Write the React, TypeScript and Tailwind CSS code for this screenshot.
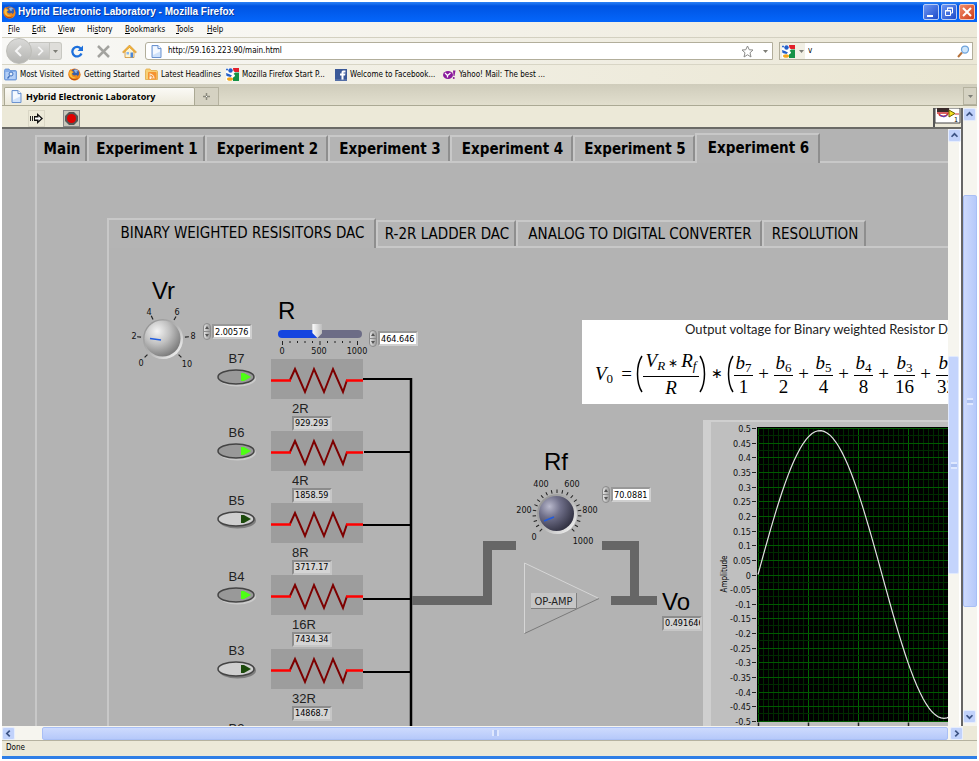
import React, { useState } from "react";

const PANEL_FONT = "font-['DejaVu_Sans_Condensed','DejaVu_Sans',sans-serif]";

/* ---------- Small drawings ---------- */

function FirefoxIcon() {
  return (
    <svg className="size-[13px] shrink-0" viewBox="0 0 26 26" aria-hidden="true">
      <circle cx="13" cy="13" r="12" fill="#e0701a" />
      <circle cx="14" cy="11" r="8.5" fill="#3a5fa8" />
      <path d="M12 4c3-2 7-1 9 2l-4 1 1 3-4-1z" fill="#8fb8e8" />
      <path d="M1 9C2 5 4 3 6 2c0 3 2 4 5 5 1 2-1 3-3 4 1 4 5 5 9 3 2 0 2 2 1 3 4-1 5-6 4-10 3 3 4 9 1 13-3 5-11 6-16 3S0 15 1 9z" fill="#f08a1c" />
      <path d="M3 9c1-2 2-4 3-4 1 3 3 3 4 3-1 2-3 2-3 5 0 4 5 7 9 6-5 4-15-1-13-10z" fill="#f9c440" />
      <path d="M2 15c3 8 13 10 19 4-4 7-16 8-19-4z" fill="#a93a10" />
    </svg>
  );
}

function PageIcon() {
  return (
    <svg className="h-[13px] w-[11px] shrink-0" viewBox="0 0 22 26" aria-hidden="true">
      <path d="M2 1h12l6 6v18H2z" fill="#cfe2fb" stroke="#6c93cf" strokeWidth="2" />
      <path d="M4 3h9v6h5v4L4 20z" fill="#f5f9ff" />
      <path d="M14 1v6h6" fill="#fff" stroke="#6c93cf" strokeWidth="2" />
    </svg>
  );
}

function GoogleIcon() {
  return (
    <svg className="size-[13px] shrink-0" viewBox="0 0 26 26" aria-hidden="true">
      <rect width="26" height="26" fill="#fff" />
      <path d="M14 0h12v8h-8c-2 0-4-3-4-8z" fill="#e3202b" />
      <path d="M18 9h8v17H14v-7c3-1 4-3 4-5l-3-2z" fill="#159246" />
      <circle cx="9" cy="5" r="4.500" fill="#2460c8" />
      <path d="M0 10l6 2 6 3-3 3-8-2z" fill="#2460c8" />
      <circle cx="2" cy="3" r="2" fill="#2460c8" />
      <ellipse cx="8" cy="22" rx="6" ry="3.500" fill="#f5a81c" />
    </svg>
  );
}

function FolderIcon() {
  return (
    <svg className="size-[13px] shrink-0" viewBox="0 0 26 26" aria-hidden="true">
      <path d="M1 5c0-2 1-3 3-3h6l2 3h11c1 0 2 1 2 2v15c0 1-1 2-2 2H3c-1 0-2-1-2-2z" fill="#86aeea" stroke="#5b8ad0" strokeWidth="1.5" />
      <path d="M3 8h20v14H3z" fill="#b4cff6" />
      <circle cx="14" cy="12" r="4" fill="#e5effc" stroke="#3f70bd" strokeWidth="2" />
      <path d="M11 16l-4 5" stroke="#3f70bd" strokeWidth="2.5" />
    </svg>
  );
}

function RssIcon() {
  return (
    <svg className="size-[13px] shrink-0" viewBox="0 0 26 26" aria-hidden="true">
      <path d="M1 5c0-2 1-3 3-3h6l2 3h11c1 0 2 1 2 2v16H1z" fill="#f8d076" stroke="#dda540" strokeWidth="1.5" />
      <rect x="6" y="8" width="17" height="15" rx="2" fill="#f59331" />
      <path d="M9 12c5 0 9 3 9 9M9 16c3 0 5 2 5 5" fill="none" stroke="#fff" strokeWidth="2" />
      <circle cx="10.500" cy="20" r="1.800" fill="#fff" />
    </svg>
  );
}

function FacebookIcon() {
  return (
    <svg className="size-[12px] shrink-0" viewBox="0 0 24 24" aria-hidden="true">
      <rect width="24" height="24" fill="#3b5998" />
      <path d="M13 22v-9h-3V9h3V7c0-3 2-4 4-4h4v4h-3c-1 0-1 1-1 2h4l-1 4h-3v9z" fill="#fff" />
      <rect y="21" width="24" height="2" fill="#6d84b4" />
    </svg>
  );
}

function YahooIcon() {
  return (
    <svg className="h-[12px] w-[13px] shrink-0" viewBox="0 0 26 24" aria-hidden="true">
      <ellipse cx="10" cy="12" rx="10" ry="8" fill="#8a1a9c" />
      <path d="M4 8l5 5v4M15 8l-6 5" fill="none" stroke="#fff" strokeWidth="2.500" />
      <path d="M20 3h5l-2 11h-2z" fill="#8a1a9c" />
      <circle cx="21.500" cy="18" r="2" fill="#8a1a9c" />
    </svg>
  );
}

function DownArrow() {
  return (
    <svg className="h-[3px] w-[5px]" viewBox="0 0 5 3" aria-hidden="true">
      <path d="M0 0h5L2.500 3z" fill="#7d7d76" />
    </svg>
  );
}

/* ---------- Browser chrome ---------- */

function TitleBar() {
  return (
    <header className="flex h-[20px] shrink-0 items-center bg-linear-to-b from-[#2c82f6] via-[#0054e3] via-20% to-[#0566fb] pr-[2px] pl-px">
      <FirefoxIcon />
      <h1 className="ml-[2px] flex-1 font-['Liberation_Sans',Arial,sans-serif] text-[10px] font-bold text-white [text-shadow:1px_1px_#0a3a9a]">
        Hybrid Electronic Laboratory - Mozilla Firefox
      </h1>
      <div className="flex gap-[2px]">
        <button aria-label="Minimize" className="size-[16px] rounded-[2px] border border-[#b9cdf5] bg-linear-to-br from-[#6e95f2] to-[#1c49c9]">
          <svg viewBox="0 0 14 14"><path d="M3 10h6v2H3z" fill="#fff" /></svg>
        </button>
        <button aria-label="Restore" className="size-[16px] rounded-[2px] border border-[#b9cdf5] bg-linear-to-br from-[#6e95f2] to-[#1c49c9]">
          <svg viewBox="0 0 14 14" fill="none" stroke="#fff">
            <path d="M5.500 5V3h5v5H9M5 3h6" />
            <path d="M3.500 5.500h5v5h-5zM3 6h6" />
          </svg>
        </button>
        <button aria-label="Close" className="size-[16px] rounded-[2px] border border-[#f3c5b6] bg-linear-to-br from-[#f08a68] to-[#cf3a10]">
          <svg viewBox="0 0 14 14"><path d="M3 3l8 8M11 3l-8 8" stroke="#fff" strokeWidth="2" /></svg>
        </button>
      </div>
    </header>
  );
}

const MENUS = [
  { pre: "", key: "F", post: "ile", width: "w-[24px]" },
  { pre: "", key: "E", post: "dit", width: "w-[26px]" },
  { pre: "", key: "V", post: "iew", width: "w-[29px]" },
  { pre: "Hi", key: "s", post: "tory", width: "w-[38px]" },
  { pre: "", key: "B", post: "ookmarks", width: "w-[51px]" },
  { pre: "", key: "T", post: "ools", width: "w-[31px]" },
  { pre: "", key: "H", post: "elp", width: "w-[24px]" },
];

function MenuBar() {
  return (
    <nav aria-label="Menu" className="flex h-[16px] shrink-0 items-center border-b border-[#d3d0c0] bg-linear-to-r from-[#fbfbfa] to-[#ece8d8] pl-[6px]">
      {MENUS.map((m) => (
        <button key={m.post} className={`text-left whitespace-nowrap ${m.width}`}>
          {m.pre}
          <span className="underline">{m.key}</span>
          {m.post}
        </button>
      ))}
    </nav>
  );
}

function NavBar() {
  return (
    <div className="flex h-[27px] shrink-0 items-center border-b border-[#d8d5c5] bg-linear-to-r from-[#f8f8f6] to-[#ebe7d6] pr-[4px]">
      <div className="ml-[4px] flex items-center">
        <button aria-label="Back" className="z-10 grid size-[26px] place-items-center rounded-full border border-[#bdbdb8] bg-linear-to-b from-[#dadad8] to-[#b5b5b2]">
          <svg className="size-[12px]" viewBox="0 0 12 12"><path d="M8 1L3 6l5 5" fill="none" stroke="#f6f6f6" strokeWidth="2" /></svg>
        </button>
        <button aria-label="Forward" className="-ml-[3px] grid h-[18px] w-[21px] place-items-center border border-[#c4c4bf] bg-linear-to-b from-[#dededc] to-[#bebebb]">
          <svg className="size-[10px]" viewBox="0 0 12 12"><path d="M4 1l5 5-5 5" fill="none" stroke="#f6f6f6" strokeWidth="2" /></svg>
        </button>
        <button aria-label="Recent pages" className="grid h-[18px] w-[12px] place-items-center rounded-r-[3px] border border-l-0 border-[#c8c8c2] bg-[#dfdeda]">
          <DownArrow />
        </button>
      </div>
      <button aria-label="Reload" className="ml-[9px]">
        <svg className="size-[13px]" viewBox="0 0 26 26">
          <path d="M21 17a9.500 9.500 0 1 1-1-9" fill="none" stroke="#1e70dc" strokeWidth="4.500" />
          <path d="M24 1v11H13z" fill="#1e70dc" />
        </svg>
      </button>
      <button aria-label="Stop" className="ml-[13px]">
        <svg className="size-[13px]" viewBox="0 0 13 13"><path d="M1 1l11 11M12 1L1 12" stroke="#a3a39f" strokeWidth="2.500" /></svg>
      </button>
      <button aria-label="Home" className="ml-[12px]">
        <svg className="size-[15px]" viewBox="0 0 30 30">
          <path d="M6 14v13h18V14l-9-9z" fill="#fdf3d0" stroke="#c98a2a" strokeWidth="1.500" />
          <path d="M1 16L15 2l14 14-2 2L15 7 3 18z" fill="#f4b53a" stroke="#c47a14" />
          <path d="M17 17h5v10h-5z" fill="#4b86d8" />
          <path d="M9 16h5v5H9z" fill="#8ab8f0" />
        </svg>
      </button>
      <div className="ml-[8px] flex h-[18px] flex-1 items-center rounded-l-[3px] border border-[#b2ae9b] bg-white pr-[4px] pl-[5px]">
        <PageIcon />
        <input aria-label="Address" defaultValue="http://59.163.223.90/main.html" className="ml-[6px] min-w-0 flex-1 bg-transparent outline-none" />
        <button aria-label="Bookmark this page" className="mr-[9px]">
          <svg className="size-[13px]" viewBox="0 0 26 26"><path d="M13 2l3.500 7.500L24 10l-6 5.500L20 24l-7-4.500L6 24l2-8.500L2 10l7.500-.5z" fill="#fff" stroke="#8a8a88" strokeWidth="2" /></svg>
        </button>
        <button aria-label="Address history"><DownArrow /></button>
      </div>
      <div className="ml-[6px] flex h-[18px] w-[194px] items-center border border-[#b2ae9b] bg-white pr-[2px]">
        <button aria-label="Search engine" className="flex h-full w-[25px] items-center gap-[4px] bg-[#f1efe4] pl-[2px]">
          <GoogleIcon />
          <DownArrow />
        </button>
        <input aria-label="Search" defaultValue="v" className="ml-[3px] min-w-0 flex-1 bg-transparent outline-none" />
        <button aria-label="Go">
          <svg className="size-[13px]" viewBox="0 0 26 26">
            <path d="M10 15l-8 9" stroke="#b5713a" strokeWidth="4" />
            <circle cx="16" cy="9" r="7" fill="#cfe6fb" stroke="#6ea3da" strokeWidth="2.500" />
          </svg>
        </button>
      </div>
    </div>
  );
}

const BOOKMARKS = [
  { label: "Most Visited", icon: <FolderIcon />, width: "w-[64px]" },
  { label: "Getting Started", icon: <FirefoxIcon />, width: "w-[77px]" },
  { label: "Latest Headlines", icon: <RssIcon />, width: "w-[81px]" },
  { label: "Mozilla Firefox Start P...", icon: <GoogleIcon />, width: "w-[109px]" },
  { label: "Welcome to Facebook...", icon: <FacebookIcon />, width: "w-[108px]" },
  { label: "Yahoo! Mail: The best ...", icon: <YahooIcon />, width: "w-[110px]" },
];

function BookmarksBar() {
  return (
    <nav aria-label="Bookmarks" className="flex h-[19px] shrink-0 items-center bg-linear-to-r from-[#f6f5f0] to-[#eae6d2] pl-[2px]">
      {BOOKMARKS.map((b) => (
        <a key={b.label} href="#" className={`flex items-center gap-[3px] whitespace-nowrap ${b.width}`}>
          {b.icon}
          {b.label}
        </a>
      ))}
    </nav>
  );
}

function TabStrip() {
  return (
    <div className="flex h-[22px] shrink-0 items-end border-b border-[#aba994] bg-linear-to-b from-[#cfccbb] to-[#e2dfce] pl-[2px]">
      <button className="flex h-[18px] w-[191px] items-center gap-[4px] rounded-t-[2px] border border-b-0 border-[#aba994] bg-linear-to-b from-[#fbfaf6] to-[#ece9da] pl-[6px] font-['Open_Sans',sans-serif] text-[9px] font-bold">
        <PageIcon />
        Hybrid Electronic Laboratory
      </button>
      <button aria-label="New tab" className="grid h-[18px] w-[24px] place-items-center border border-b-0 border-l-0 border-[#b5b29f] bg-[#d5d2c2]">
        <svg className="size-[7px]" viewBox="0 0 7 7"><path d="M3.500 0v7M0 3.500h7" stroke="#8b8a7e" strokeWidth="1.500" /><path d="M3 3.500h1" stroke="#fff" /></svg>
      </button>
      <button aria-label="List all tabs" className="ml-auto grid h-[18px] w-[14px] place-items-center border border-[#b5b29f] bg-[#d5d2c2]">
        <DownArrow />
      </button>
    </div>
  );
}

/* ---------- Scroll bars ---------- */

const ARROWS = {
  up: "M3 8l3.500-3.500L10 8",
  down: "M3 5l3.500 3.500L10 5",
  left: "M8 3L4.500 6.500 8 10",
  right: "M5 3l3.500 3.500L5 10",
};

function ScrollButton({ dir }: { dir: keyof typeof ARROWS }) {
  return (
    <button aria-label={`Scroll ${dir}`} className="size-[13px] shrink-0 rounded-[2px] border border-[#e6edfd] bg-[#c1d2fb]">
      <svg viewBox="0 0 13 13"><path d={ARROWS[dir]} fill="none" stroke="#3d5485" strokeWidth="2" /></svg>
    </button>
  );
}

/* ---------- Instrument controls ---------- */

function NumericControl({ label, value }: { label: string; value: string }) {
  const [text, setText] = useState(value);
  const step = (d: number) => setText(String(Number((Number(text) + d).toFixed(5))));
  return (
    <div className="flex items-center gap-px">
      <div className="flex h-[17px] w-[8px] flex-col overflow-hidden rounded-full border border-[#8c8c8c] bg-linear-to-r from-[#e2e2e2] to-[#9c9c9c]">
        <button aria-label={`Increase ${label}`} onClick={() => step(1)} className="grid flex-1 place-items-center border-b border-[#8c8c8c]">
          <svg className="h-[3px] w-[4px]" viewBox="0 0 4 3"><path d="M0 3l2-3 2 3z" fill="#555" /></svg>
        </button>
        <button aria-label={`Decrease ${label}`} onClick={() => step(-1)} className="grid flex-1 place-items-center">
          <svg className="h-[3px] w-[4px]" viewBox="0 0 4 3"><path d="M0 0l2 3 2-3z" fill="#555" /></svg>
        </button>
      </div>
      <input
        aria-label={label}
        value={text}
        onChange={(e) => setText(e.target.value)}
        className="h-[15px] w-[40px] border-2 border-t-[#989898] border-r-[#cfcfcf] border-b-[#cfcfcf] border-l-[#989898] bg-white pl-px text-[9px] outline-none"
      />
    </div>
  );
}

function Indicator({ value, label }: { value: string; label: string }) {
  return (
    <output
      aria-label={label}
      className="block h-[15px] w-[40px] overflow-hidden border-2 border-t-[#8c8c8c] border-r-[#c6c6c6] border-b-[#c6c6c6] border-l-[#8c8c8c] bg-[#d4d4d4] pl-px text-[9px] leading-[11px] whitespace-nowrap"
    >
      {value}
    </output>
  );
}

const VR_TICKS = [
  { t: "0", a: 225, x: 2, y: 61 },
  { t: "2", a: 275, x: -5, y: 34 },
  { t: "4", a: 333, x: 10, y: 10 },
  { t: "6", a: 30, x: 38, y: 10 },
  { t: "8", a: 85, x: 54, y: 34 },
  { t: "10", a: 135, x: 48, y: 62 },
];

function VrKnob() {
  return (
    <svg className="block h-[68px] w-[84px]" viewBox="-12 0 84 68" role="img" aria-label="Vr knob set to 2.00576">
      <defs>
        <radialGradient id="vr" cx="0.35" cy="0.3" r="0.8">
          <stop offset="0" stopColor="#f4f4f4" />
          <stop offset="0.45" stopColor="#c0c0c0" />
          <stop offset="1" stopColor="#6f6f6f" />
        </radialGradient>
        <linearGradient id="rim" x1="0" y1="0" x2="1" y2="1">
          <stop offset="0" stopColor="#8a8a8a" />
          <stop offset="0.5" stopColor="#b4b4b4" />
          <stop offset="1" stopColor="#fff" />
        </linearGradient>
      </defs>
      {VR_TICKS.map((k) => (
        <g key={k.t}>
          <path d="M24 12v-4" transform={`rotate(${k.a} 24 34)`} stroke="#222" strokeWidth="1.200" />
          <text x={k.x} y={k.y} fontSize="9" textAnchor="middle" fill="#111">{k.t}</text>
        </g>
      ))}
      <circle cx="24" cy="34" r="20" fill="url(#rim)" />
      <circle cx="23.500" cy="33.500" r="18" fill="url(#vr)" />
      <path d="M11 33.500l11 1.500" stroke="#1f5be0" strokeWidth="1.500" />
    </svg>
  );
}

const RF_TICKS = Array.from({ length: 21 }, (_, i) => 225 + i * 13.5);

function RfKnob() {
  return (
    <svg className="block h-[70px] w-[88px]" viewBox="516 476 88 70" role="img" aria-label="Rf knob set to 70.0881">
      <defs>
        <radialGradient id="rf" cx="0.3" cy="0.3" r="0.8">
          <stop offset="0" stopColor="#b9b9cc" />
          <stop offset="0.4" stopColor="#70708a" />
          <stop offset="1" stopColor="#2c2c3c" />
        </radialGradient>
      </defs>
      {RF_TICKS.map((a) => (
        <path key={a} d="M557 489.500v3.500" transform={`rotate(${a} 557 514)`} stroke="#222" />
      ))}
      <circle cx="557" cy="514" r="20" fill="url(#rim)" />
      <circle cx="556.500" cy="513.500" r="17.500" fill="url(#rf)" />
      <path d="M544 521l10-4" stroke="#1f5be0" strokeWidth="1.500" />
      <g fontSize="9" textAnchor="middle" fill="#111">
        <text x="534" y="540">0</text>
        <text x="524" y="513">200</text>
        <text x="541" y="487">400</text>
        <text x="572" y="487">600</text>
        <text x="590" y="513">800</text>
        <text x="583" y="544">1000</text>
      </g>
    </svg>
  );
}

function BitSwitch({ name, initial, height }: { name: string; initial: boolean; height: string }) {
  const [on, setOn] = useState(initial);
  return (
    <div className={`flex shrink-0 flex-col items-center ${height}`}>
      <label htmlFor={name} className="font-['Liberation_Sans',Arial,sans-serif] text-[13px] leading-[16px] text-[#222]">{name}</label>
      <button id={name} role="switch" aria-checked={on} onClick={() => setOn(!on)} className="mt-px">
        <svg className="block h-[19px] w-[41px]" viewBox="0 0 41 19">
          <ellipse cx="21.500" cy="10.500" rx="18.500" ry="8" fill={on ? "#cacaca" : "#7c7c7c"} />
          <ellipse cx="20" cy="9" rx="18" ry="7" fill={on ? "#999" : "#cfcfcf"} stroke="#444" strokeWidth="1.500" />
          <path d="M25 5h3l7 4-7 4h-3z" fill={on ? "#4eff14" : "#1c4a0c"} />
        </svg>
      </button>
    </div>
  );
}

const BITS = [
  { name: "B7", on: true, height: "h-[74px]" },
  { name: "B6", on: true, height: "h-[68px]" },
  { name: "B5", on: false, height: "h-[76px]" },
  { name: "B4", on: true, height: "h-[74px]" },
  { name: "B3", on: false, height: "h-[78px]" },
  { name: "B2", on: false, height: "h-[74px]" },
];

const RESISTORS = [
  { name: "2R", value: "929.293", height: "h-[72px]" },
  { name: "4R", value: "1858.59", height: "h-[72px]" },
  { name: "8R", value: "3717.17", height: "h-[72px]" },
  { name: "16R", value: "7434.34", height: "h-[74px]" },
  { name: "32R", value: "14868.7", height: "h-[74px]" },
];

function Resistor({ name, value, height }: { name: string; value: string; height: string }) {
  return (
    <div className={`flex shrink-0 flex-col ${height}`}>
      <svg className="block h-[40px] w-[92px] shrink-0 bg-[#9d9d9d]" viewBox="0 0 92 40" fill="none" aria-hidden="true">
        <path d="M19 21l5-11 10 23 9-23 10 23 9-23 10 23 4-12" stroke="#7d0000" strokeWidth="2" />
        <path d="M0 21.500h20M75 21.500h17" stroke="#ff0000" strokeWidth="2.500" />
      </svg>
      <span className="pt-[2px] pl-[21px] font-['Liberation_Sans',Arial,sans-serif] text-[13px] leading-[15px] text-[#222]">{name}</span>
      <div className="pl-[21px]">
        <Indicator value={value} label={`${name} value`} />
      </div>
    </div>
  );
}

function InputWires() {
  return (
    <svg className="block h-[370px] w-[153px] shrink-0" viewBox="363 359 153 370" fill="none" aria-hidden="true">
      <path d="M363 379h49M364 452h47M363 525h48M363 599h48M363 672h48" stroke="#000" strokeWidth="2" />
      <path d="M411 378v352" stroke="#000" strokeWidth="2.500" />
      <path d="M412 600.500h75.500V545.500H516" stroke="#666" strokeWidth="9" />
    </svg>
  );
}

function OpAmp() {
  return (
    <svg className="block h-[95px] w-[146px] shrink-0" viewBox="516 541 146 95" fill="none" role="img" aria-label="Operational amplifier">
      <path d="M602 545.500h32.500V600M611 600.500h46" stroke="#666" strokeWidth="9" />
      <path d="M524.500 633.500V563L599 598.500" stroke="#d6d6d6" />
      <path d="M524.500 633.500L599 598.500" stroke="#7a7a7a" />
      <rect x="531" y="593" width="45" height="15" fill="#c6c6c6" />
      <path d="M531 608.500h45.500V593" stroke="#808080" />
      <text x="553.500" y="605" fontSize="11" textAnchor="middle" fill="#222">OP-AMP</text>
    </svg>
  );
}

/* ---------- Formula ---------- */

function Term({ sub, den, width }: { sub: string; den: string; width: string }) {
  return (
    <span className={`flex shrink-0 flex-col items-center ${width}`}>
      <i className="w-full border-b border-black text-center leading-[25px] whitespace-nowrap">
        b<sub className="text-[13px] not-italic">{sub}</sub>
      </i>
      <span className="leading-[22px]">{den}</span>
    </span>
  );
}

const TERMS = [
  { sub: "7", den: "1", width: "w-[19px]" },
  { sub: "6", den: "2", width: "w-[19px]" },
  { sub: "5", den: "4", width: "w-[19px]" },
  { sub: "4", den: "8", width: "w-[19px]" },
  { sub: "3", den: "16", width: "w-[21px]" },
  { sub: "2", den: "32", width: "w-[21px]" },
];

function Paren({ close = false }: { close?: boolean }) {
  return (
    <svg className="h-[38px] w-[7px] shrink-0" viewBox="0 0 7 38" aria-hidden="true">
      <path d={close ? "M1 1c6 9 6 27 0 36" : "M6 1C0 10 0 28 6 37"} fill="none" stroke="#000" strokeWidth="1.500" />
    </svg>
  );
}

function Formula() {
  return (
    <figure className="ml-[66px] h-[84px] w-[480px] bg-white">
      <figcaption className="pl-[103px] font-['Lato',Calibri,sans-serif] text-[13px] leading-[19px] text-[#222]">
        Output voltage for Binary weighted Resistor DAC
      </figcaption>
      <div className="mt-[9px] flex items-center pl-[13px] font-['Liberation_Serif',serif] text-[19px] leading-[24px] text-black">
        <i className="w-[22px]">V<sub className="text-[13px] not-italic">0</sub></i>
        <span className="w-[19px] text-center">=</span>
        <Paren />
        <span className="flex w-[56px] shrink-0 flex-col items-center whitespace-nowrap">
          <i className="w-full border-b border-black text-center leading-[25px]">
            V<sub className="text-[13px]">R</sub>
            <span className="mx-[3px] text-[12px] not-italic">∗</span>
            R<sub className="text-[13px]">f</sub>
          </i>
          <i className="leading-[22px]">R</i>
        </span>
        <Paren close />
        <span className="w-[21px] text-center text-[14px]">∗</span>
        <Paren />
        {TERMS.map((t, i) => (
          <React.Fragment key={t.sub}>
            {i > 0 && <span className="w-[21px] shrink-0 text-center">+</span>}
            <Term {...t} />
          </React.Fragment>
        ))}
      </div>
    </figure>
  );
}

/* ---------- Waveform chart ---------- */

const PLOT = { left: 55, top: 8, width: 300, height: 293 };
const LEVELS = Array.from({ length: 21 }, (_, i) => (10 - i) / 20);
const levelY = (v: number) => PLOT.top + (0.5 - v) * PLOT.height;
const WAVE = Array.from({ length: 101 }, (_, i) => {
  const x = i * 3;
  return `${PLOT.left + x},${levelY(0.491 * Math.sin((x / 248) * 2 * Math.PI)).toFixed(1)}`;
}).join(" ");

function Chart() {
  return (
    <svg className="block h-[320px] w-[380px] shrink-0" viewBox="0 0 380 320" role="img" aria-label="Output waveform">
      <rect width="380" height="320" fill="#bfbfbf" />
      <rect width="8" height="320" fill="#cfcfcf" />
      <rect width="380" height="2" fill="#cfcfcf" />
      <rect x={PLOT.left - 1} y={PLOT.top - 1} width={PLOT.width} height={PLOT.height + 2} fill="#000" />
      {Array.from({ length: 60 }, (_, i) => (
        <path key={i} d={`M${PLOT.left + i * 5 + 0.5} 8v293`} stroke={i % 10 === 0 ? "#006400" : "#002c00"} />
      ))}
      {LEVELS.map((v) => (
        <g key={v}>
          <path d={`M55 ${Math.round(levelY(v)) + 0.5}h300`} stroke="#005a00" />
          <path d={`M55 ${Math.round(levelY(v) + 7) + 0.5}h300`} stroke="#002c00" />
          <path d={`M49 ${Math.round(levelY(v)) + 0.5}h4`} stroke="#222" />
          <text x="48" y={levelY(v) + 4} fontSize="9" textAnchor="end" fill="#111">{v}</text>
        </g>
      ))}
      <rect x="54" y="302" width="300" height="18" fill="#bfbfbf" />
      {[0, 1, 2, 3, 4].map((i) => (
        <path key={i} d={`M${55.5 + i * 50} 302.500v4`} stroke="#222" strokeWidth="1.500" />
      ))}
      <polyline points={WAVE} fill="none" stroke="#e0e0e0" strokeWidth="1.200" />
      <text transform="translate(24 154) rotate(-90)" fontSize="8" textAnchor="middle" fill="#000">Amplitude</text>
    </svg>
  );
}

/* ---------- Front panel ---------- */

const EXPERIMENTS = [
  { label: "Main", width: "w-[52px]" },
  { label: "Experiment 1", width: "w-[118px]" },
  { label: "Experiment 2", width: "w-[123px]" },
  { label: "Experiment 3", width: "w-[122px]" },
  { label: "Experiment 4", width: "w-[123px]" },
  { label: "Experiment 5", width: "w-[122px]" },
  { label: "Experiment 6", width: "w-[125px]" },
];

const CIRCUITS = [
  { label: "BINARY WEIGHTED RESISITORS DAC", width: "w-[269px]" },
  { label: "R-2R LADDER DAC", width: "w-[140px]" },
  { label: "ANALOG TO DIGITAL CONVERTER", width: "w-[246px]" },
  { label: "RESOLUTION", width: "w-[104px]" },
];

const TITLE = "font-['Liberation_Sans',Arial,sans-serif] text-[24px] leading-[28px]";

function PanelTabs({ items, active, text }: { items: { label: string; width: string }[]; active: number; text: string }) {
  return (
    <div role="tablist" className={`flex h-[28px] shrink-0 items-end ${text}`}>
      {items.map((t, i) => (
        <button
          key={t.label}
          role="tab"
          aria-selected={i === active}
          className={`shrink-0 border-t-2 border-r-2 border-l-2 border-t-[#c8c8c8] border-r-[#8e8e8e] border-l-[#c8c8c8] bg-[#b4b4b4] pl-[2px] text-center whitespace-nowrap ${t.width} ${
            i === active ? "z-10 -mb-[2px] h-[30px] pb-[3px]" : "h-[26px]"
          }`}
        >
          {t.label}
        </button>
      ))}
    </div>
  );
}

function DacPanel() {
  return (
    <div className="flex">
      <div className="flex w-[160px] shrink-0 flex-col">
        <div className="flex pt-[29px]">
          <div className="ml-[18px] w-[84px] shrink-0">
            <h2 className={`pl-[25px] ${TITLE}`}>Vr</h2>
            <VrKnob />
          </div>
          <div className="-ml-[8px] pt-[46px]">
            <NumericControl label="Vr" value="2.00576" />
          </div>
        </div>
        <div className="-mt-[22px] mr-[12px] flex w-[41px] flex-col self-end">
          {BITS.map((b) => (
            <BitSwitch key={b.name} name={b.name} initial={b.on} height={b.height} />
          ))}
        </div>
      </div>

      <div className="flex w-[247px] shrink-0 flex-col pl-[2px]">
        <div className="flex h-[111px] items-start pt-[49px]">
          <div className="w-[98px] pl-[7px]">
            <h2 className={TITLE}>R</h2>
            <input
              type="range"
              aria-label="R"
              min="0"
              max="1000"
              step="any"
              defaultValue="464.646"
              className="mt-[2px] block h-[14px] w-[84px] appearance-none bg-transparent [&::-webkit-slider-runnable-track]:h-[8px] [&::-webkit-slider-runnable-track]:rounded-full [&::-webkit-slider-runnable-track]:bg-linear-to-r [&::-webkit-slider-runnable-track]:from-[#1445e0] [&::-webkit-slider-runnable-track]:from-47% [&::-webkit-slider-runnable-track]:to-[#6c6c86] [&::-webkit-slider-runnable-track]:to-47% [&::-webkit-slider-thumb]:-mt-[6px] [&::-webkit-slider-thumb]:h-[14px] [&::-webkit-slider-thumb]:w-[10px] [&::-webkit-slider-thumb]:appearance-none [&::-webkit-slider-thumb]:bg-linear-to-r [&::-webkit-slider-thumb]:from-white [&::-webkit-slider-thumb]:to-[#bdbdbd] [&::-webkit-slider-thumb]:[clip-path:polygon(0_0,100%_0,100%_65%,50%_100%,0_65%)]"
            />
            <svg className="block h-[16px] w-[91px]" viewBox="0 0 91 16" aria-hidden="true">
              {Array.from({ length: 11 }, (_, i) => (
                <path key={i} d={`M${4.5 + i * 7.5} 0v${i % 5 === 0 ? 4 : 2}`} stroke="#222" />
              ))}
              <g fontSize="9" textAnchor="middle" fill="#111">
                <text x="4" y="13">0</text>
                <text x="41" y="13">500</text>
                <text x="79" y="13">1000</text>
              </g>
            </svg>
          </div>
          <div className="pt-[33px]">
            <NumericControl label="R value" value="464.646" />
          </div>
        </div>
        <div className="flex">
          <div className="w-[92px] shrink-0">
            {RESISTORS.map((r) => (
              <Resistor key={r.name} {...r} />
            ))}
          </div>
          <InputWires />
        </div>
      </div>

      <div className="flex shrink-0 flex-col pt-[72px]">
        <Formula />
        <div className="mt-[16px] flex">
          <div className="w-[187px] shrink-0 pt-[28px]">
            <div className="flex h-[93px]">
              <div className="w-[86px] shrink-0">
                <h2 className={`pl-[28px] ${TITLE}`}>Rf</h2>
                <RfKnob />
              </div>
              <div className="pt-[38px]">
                <NumericControl label="Rf" value="70.0881" />
              </div>
            </div>
            <div className="flex">
              <OpAmp />
              <div className="pt-[47px]">
                <h2 className={TITLE}>Vo</h2>
                <Indicator value="0.491646" label="Vo" />
              </div>
            </div>
          </div>
          <Chart />
        </div>
      </div>
    </div>
  );
}

function FrontPanel() {
  return (
    <main className="min-w-0 flex-1 overflow-hidden bg-[#b3b3b3] pt-[4px] pl-[33px] text-black">
      <PanelTabs items={EXPERIMENTS} active={6} text="text-[15px] font-bold" />
      <section className="h-full border-t-2 border-l-2 border-[#c8c8c8] pt-[55px] pl-[70px]">
        <PanelTabs items={CIRCUITS} active={0} text="text-[15px]" />
        <section className="border-t-2 border-l-2 border-[#c8c8c8]">
          <DacPanel />
        </section>
      </section>
    </main>
  );
}

function AppletToolbar() {
  return (
    <div className="flex h-[21px] shrink-0 items-end border-b-2 border-[#6a6a66] bg-[#ece9d8] pl-[26px]">
      <button aria-label="Run" className="grid size-[17px] place-items-center border border-[#dad7c6]">
        <svg className="h-[11px] w-[13px]" viewBox="0 0 13 11">
          <path d="M0 3h1v5H0zM2 3h1v5H2z" fill="#222" />
          <path d="M4 3h3V0l6 5.500L7 11V8H4z" fill="#111" />
          <path d="M5 4.500h3.500V3L11 5.500 8.500 8V6.500H5z" fill="#fff" />
        </svg>
      </button>
      <button aria-label="Abort" className="ml-[18px] grid size-[17px] place-items-center border border-[#888] bg-[#c9c7bb]">
        <svg className="size-[13px]" viewBox="0 0 13 13"><path d="M4 0h5l4 4v5l-4 4H4L0 9V4z" fill="#555" /><circle cx="6.500" cy="6.500" r="4.500" fill="#e00000" /></svg>
      </button>
      <div className="ml-auto h-full border-l-2 border-[#555]">
        <svg className="block h-[16px] w-[26px]" viewBox="0 0 26 16" role="img" aria-label="Instrument icon">
          <path d="M0 0h25v15H0z" fill="#fff" stroke="#444" />
          <path d="M2 0h12v4H2z" fill="#3a2a2a" />
          <path d="M2 5h13M4 6c1 3 7 3 9 0" stroke="#d03030" strokeWidth="1.500" fill="none" />
          <path d="M5 7l4 2 3-2" stroke="#4040d0" fill="none" />
          <path d="M14 2l6 3.500-6 3.500z" fill="#f2e020" stroke="#6a6000" />
          <path d="M20 6h4" stroke="#d03030" />
          <text x="19" y="14" fontSize="7" fill="#000">1</text>
        </svg>
      </div>
    </div>
  );
}

export default function App() {
  return (
    <div className={`flex h-screen flex-col overflow-hidden bg-white p-[2px] text-[8px] leading-[12px] text-black ${PANEL_FONT}`}>
      <TitleBar />
      <MenuBar />
      <NavBar />
      <BookmarksBar />
      <TabStrip />

      <div className="flex min-h-0 flex-1 border-t-2 border-[#ece9d8] bg-[#ece9d8]">
        <div className="flex min-w-0 flex-1 flex-col">
          <div className="flex min-h-0 flex-1 flex-col border-r-2 border-[#666]">
            <AppletToolbar />
            <div className="flex min-h-0 flex-1">
              <FrontPanel />
              <div className="flex w-[13px] shrink-0 flex-col border-r-2 border-white bg-[#f6f5ef]">
                <ScrollButton dir="up" />
                <div className="mt-[214px] grid h-[218px] place-items-center rounded-[2px] border border-[#e0e9fd] bg-[#c4d4fc]">
                  <span className="h-[7px] w-[6px] border-y-2 border-[#dfe8fe] bg-[#aec2f2]" />
                </div>
              </div>
            </div>
          </div>
          <div className="flex h-[14px] shrink-0 items-center bg-[#f6f5ef]">
            <ScrollButton dir="left" />
            <div className="mr-[2px] ml-[27px] grid h-[13px] flex-1 place-items-center rounded-[2px] border border-[#a9bff5] bg-linear-to-b from-[#cddafd] to-[#b6c9fa]">
              <span className="h-[6px] w-[7px] border-x-2 border-[#dfe8fe] bg-[#aec2f2]" />
            </div>
            <ScrollButton dir="right" />
          </div>
        </div>
        <div className="flex w-[14px] shrink-0 flex-col bg-[#ece9d8] pb-[14px]">
          <div className="flex flex-1 flex-col bg-[#f6f5ef]">
            <ScrollButton dir="up" />
            <div className="mt-[74px] grid h-[412px] place-items-center rounded-[2px] border border-[#a9bff5] bg-linear-to-r from-[#cddafd] to-[#b6c9fa]">
              <span className="h-[7px] w-[6px] border-y-2 border-[#dfe8fe] bg-[#aec2f2]" />
            </div>
            <div className="mt-auto"><ScrollButton dir="down" /></div>
          </div>
        </div>
      </div>

      <footer className="h-[16px] shrink-0 border-t border-[#b5b29f] bg-[#ece9d8] pl-[4px] leading-[14px]">Done</footer>
      <div className="h-[3px] shrink-0 bg-[#2f7fe6]" />
    </div>
  );
}
